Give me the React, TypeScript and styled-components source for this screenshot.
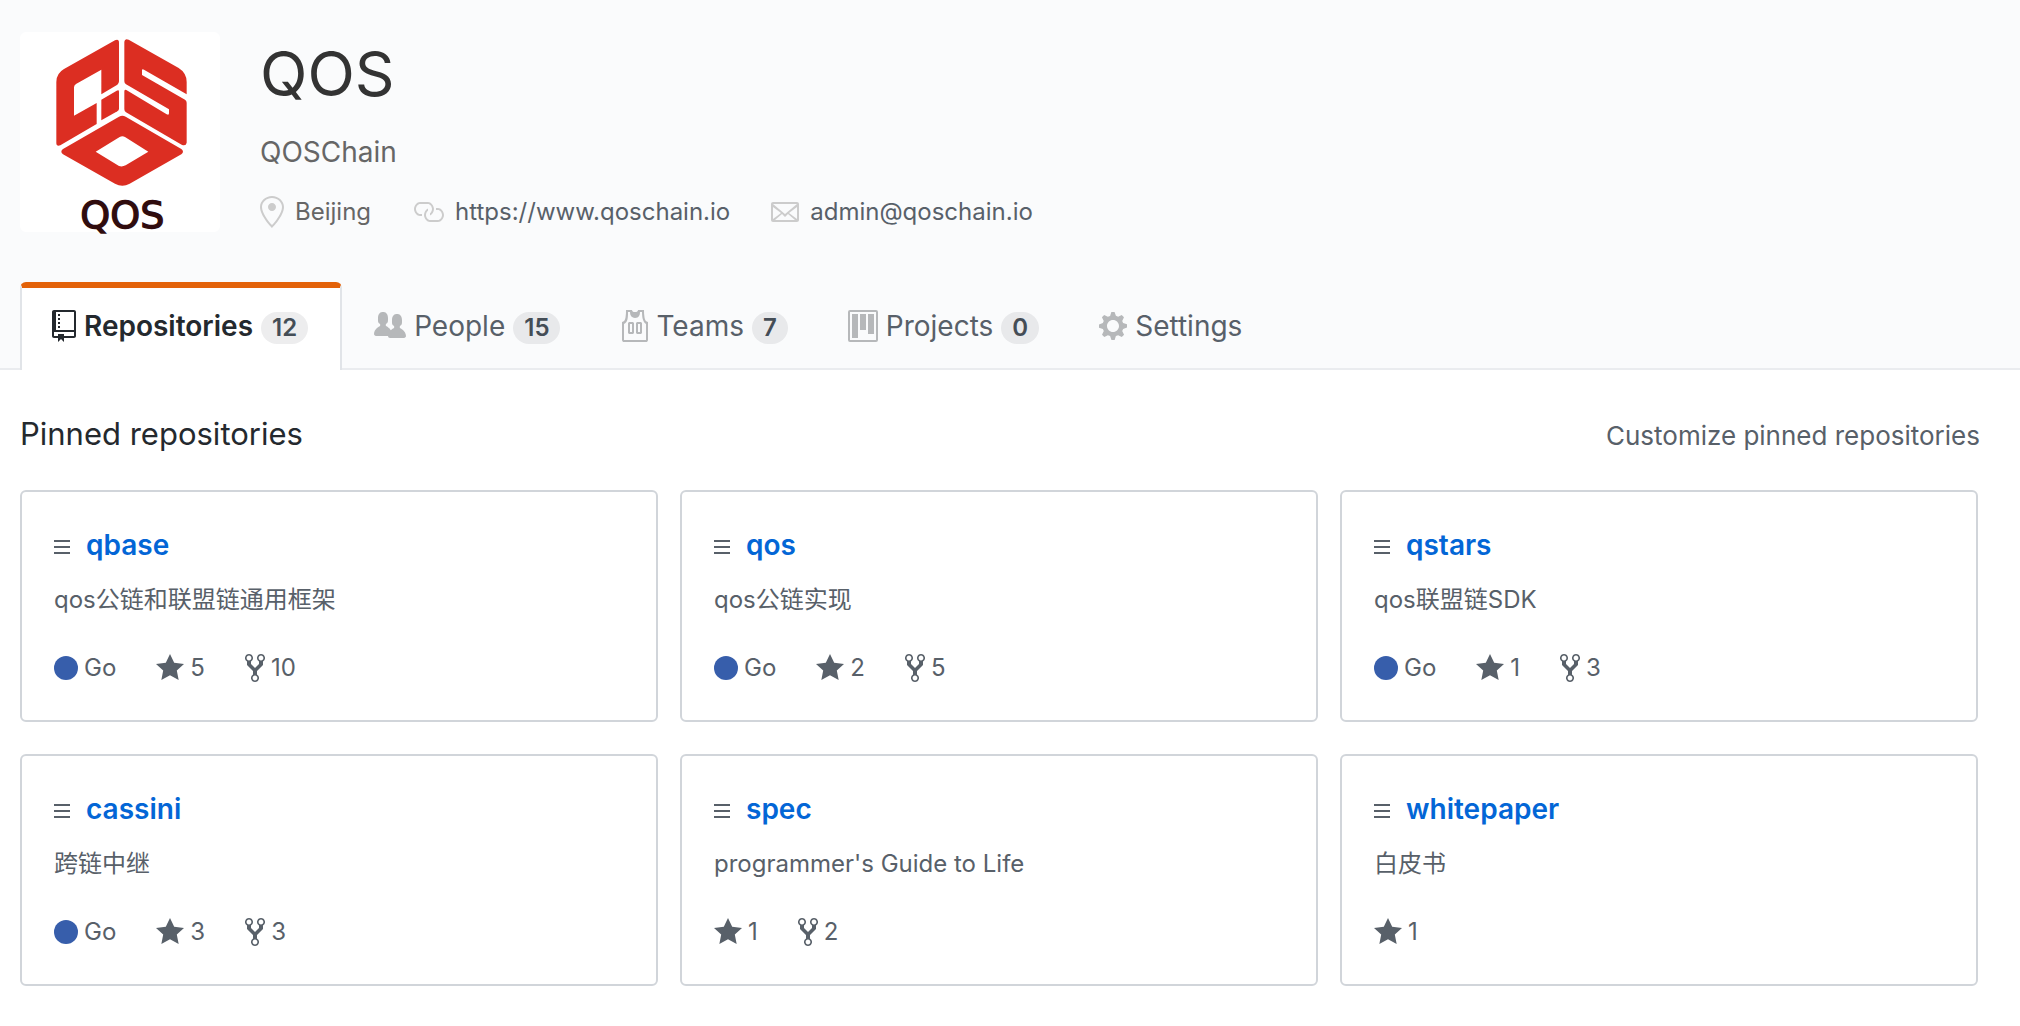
import React from "react";
import styled, { createGlobalStyle } from "styled-components";

const GlobalStyle = createGlobalStyle`
  * { box-sizing: border-box; }
  body {
    margin: 0;
    background: #fff;
    color: #24292e;
    font-family: Inter, "Noto Sans CJK SC", sans-serif;
    font-size: 24px;
    line-height: 36px;
  }
  h1, h2, h3, p, ul { margin: 0; padding: 0; font-weight: 400; }
  ul { list-style: none; }
  a { color: inherit; text-decoration: none; }
`;

const icons = {
  repo: { w: 12, d: "M4 9H3V8h1v1zm0-3H3v1h1V6zm0-2H3v1h1V4zm0-2H3v1h1V2zm8-1v12c0 .55-.45 1-1 1H6v2l-1.5-1.5L3 16v-2H1c-.55 0-1-.45-1-1V1c0-.55.45-1 1-1h10c.55 0 1 .45 1 1zm-1 10H1v2h2v-1h3v1h5v-2zm0-10H2v9h9V1z" },
  people: { w: 16, d: "M16 12.999c0 .439-.45 1-1 1H7.995c-.539 0-.994-.447-.995-.999H1c-.54 0-1-.561-1-1 0-2.634 3-4 3-4s.229-.409 0-1c-.841-.621-1.058-.59-1-3 .058-2.419 1.367-3 2.5-3s2.442.58 2.5 3c.058 2.41-.159 2.379-1 3-.229.59 0 1 0 1s1.549.711 2.42 2.088C9.196 9.369 10 8.999 10 8.999s.229-.409 0-1c-.841-.62-1.058-.59-1-3 .058-2.419 1.367-3 2.5-3s2.437.581 2.495 3c.059 2.41-.158 2.38-1 3-.229.59 0 1 0 1s3.005 1.366 3.005 4" },
  jersey: { w: 14, d: "M4.5 6l-.5.5v5l.5.5h2l.5-.5v-5L6.5 6h-2zM6 11H5V7h1v4zm6.27-7.25C12.05 2.37 11.96 1.12 12 0H9.02c0 .27-.13.48-.39.69-.25.2-.63.3-1.13.3-.5 0-.88-.09-1.13-.3-.23-.2-.36-.42-.37-.69H3c.05 1.13-.03 2.38-.25 3.75C2.55 5.13 1.95 5.88 1 6v9c.02.27.11.48.31.69.2.21.42.3.69.31h11c.27-.02.48-.11.69-.31.21-.2.3-.42.31-.69V6c-.95-.13-1.53-.88-1.75-2.25h.02zM13 15H2V7c.89-.5 1.48-1.25 1.72-2.25S4.03 2.5 4 1h1c-.02.78.16 1.47.52 2.06.36.58 1.02.89 2 .94.98-.02 1.64-.33 2-.94.36-.59.5-1.28.48-2.06h1c.02 1.42.13 2.55.33 3.38.2.81.69 2 1.67 2.63V15zM8.5 6l-.5.5v5l.5.5h2l.5-.5v-5l-.5-.5h-2zm1.5 5H9V7h1v4z" },
  project: { w: 15, d: "M10 12h3V2h-3v10zm-4-2h3V2H6v8zm-4 4h3V2H2v12zm-1 1h13V1H1v14zM14 0H1a1 1 0 0 0-1 1v14a1 1 0 0 0 1 1h13a1 1 0 0 0 1-1V1a1 1 0 0 0-1-1z" },
  gear: { w: 14, d: "M14 8.77v-1.6l-1.94-.64-.45-1.09.88-1.84-1.13-1.13-1.81.91-1.09-.45-.69-1.92h-1.6l-.63 1.94-1.11.45-1.84-.88-1.13 1.13.91 1.81-.45 1.09L0 7.23v1.59l1.94.64.45 1.09-.88 1.84 1.13 1.13 1.81-.91 1.09.45.69 1.92h1.59l.63-1.94 1.11-.45 1.84.88 1.13-1.13-.92-1.81.47-1.09L14 8.75v.02zM7 11c-1.66 0-3-1.34-3-3s1.34-3 3-3 3 1.34 3 3-1.34 3-3 3z" },
  star: { w: 14, d: "M14 6l-4.9-.64L7 1 4.9 5.36 0 6l3.6 3.26L2.67 14 7 11.67 11.33 14l-.93-4.74L14 6z" },
  fork: { w: 10, d: "M8 1a1.993 1.993 0 0 0-1 3.72V6L5 8 3 6V4.72A1.993 1.993 0 0 0 2 1a1.993 1.993 0 0 0-1 3.72V6.5l3 3v1.78A1.993 1.993 0 0 0 5 15a1.993 1.993 0 0 0 1-3.72V9.5l3-3V4.72A1.993 1.993 0 0 0 8 1zM2 4.2C1.34 4.2.8 3.65.8 3c0-.65.55-1.2 1.2-1.2.65 0 1.2.55 1.2 1.2 0 .65-.55 1.2-1.2 1.2zm3 10c-.66 0-1.2-.55-1.2-1.2 0-.65.55-1.2 1.2-1.2.65 0 1.2.55 1.2 1.2 0 .65-.55 1.2-1.2 1.2zm3-10c-.66 0-1.2-.55-1.2-1.2 0-.65.55-1.2 1.2-1.2.65 0 1.2.55 1.2 1.2 0 .65-.55 1.2-1.2 1.2z" },
  link: { w: 16, d: "M4 9h1v1H4c-1.5 0-3-1.69-3-3.5S2.55 3 4 3h4c1.45 0 3 1.69 3 3.5 0 1.41-.91 2.72-2 3.25V8.59c.58-.45 1-1.27 1-2.09C10 5.22 8.98 4 8 4H4c-.98 0-2 1.22-2 2.5S3 9 4 9zm9-3h-1v1h1c1 0 2 1.22 2 2.5S13.98 12 13 12H9c-.98 0-2-1.22-2-2.5 0-.83.42-1.64 1-2.09V6.25c-1.09.53-2 1.84-2 3.25C6 11.31 7.55 13 9 13h4c1.45 0 3-1.69 3-3.5S14.5 6 13 6z" },
  mail: { w: 14, d: "M0 4v8c0 .55.45 1 1 1h12c.55 0 1-.45 1-1V4c0-.55-.45-1-1-1H1c-.55 0-1 .45-1 1zm13 0L7 9 1 4h12zM1 5.5l4 3-4 3v-6zM2 12l3.5-3L7 10.5 8.5 9l3.5 3H2zm11-.5l-4-3 4-3v6z" },
  location: { w: 12, d: "M6 0C2.69 0 0 2.5 0 5.5 0 10.02 6 16 6 16s6-5.98 6-10.5C12 2.5 9.31 0 6 0zm0 14.55C4.14 12.52 1 8.44 1 5.5 1 3.02 3.25 1 6 1c1.34 0 2.61.48 3.56 1.36.92.86 1.44 1.97 1.44 3.14 0 2.94-3.14 7.02-5 9.05zM8 5.5c0 1.11-.89 2-2 2-1.11 0-2-.89-2-2 0-1.11.89-2 2-2 1.11 0 2 .89 2 2z" },
  grabber: { w: 8, d: "M8 4v1H0V4h8zM0 8h8V7H0v1zm0 3h8v-1H0v1z" },
};

type IconName = keyof typeof icons;

const Svg = styled.svg`
  display: block;
  flex: none;
  fill: currentColor;
`;

const Icon = ({ name }: { name: IconName }) => {
  const { w, d } = icons[name];
  return (
    <Svg width={w * 2} height={32} viewBox={`0 0 ${w} 16`} aria-hidden="true">
      <path fillRule="evenodd" d={d} />
    </Svg>
  );
};

const PageHeader = styled.header`
  padding: 32px 20px 0;
  background: #fafbfc;
  border-bottom: 2px solid #eaecef;
`;

const Profile = styled.div`
  display: flex;
  gap: 40px;
  margin-bottom: 50px;
`;

const Avatar = styled.svg`
  flex: none;
  width: 200px;
  height: 200px;
  overflow: visible;
  border-radius: 6px;
  background: #fff;
`;

const Wordmark = styled.text`
  font-family: "DejaVu Sans", sans-serif;
  font-size: 114px;
  fill: #300c0e;
  stroke: #300c0e;
  stroke-width: 4px;
`;

const OrgName = styled.h1`
  font-size: 62px;
  line-height: 84px;
  color: #333;
`;

const OrgTagline = styled.p`
  margin-top: 15px;
  font-size: 28px;
  line-height: 42px;
  color: #666;
`;

const OrgMeta = styled.ul`
  display: flex;
  flex-wrap: wrap;
  gap: 41px;
  margin-top: 21px;
`;

const OrgMetaItem = styled.li`
  display: flex;
  align-items: center;
  gap: 11px;
  color: #666;

  svg { color: #ccc; }
  a { color: #586069; }
`;

const Tabs = styled.nav`
  display: flex;
  margin-bottom: -2px;
`;

const Tab = styled.a<{ $active?: boolean }>`
  display: flex;
  align-items: center;
  gap: 8px;
  padding: 17px 28px 23px;
  border: 2px solid transparent;
  border-top-width: 6px;
  border-bottom: 0;
  border-radius: 6px 6px 0 0;
  font-size: 28px;
  line-height: 42px;
  color: #586069;

  svg { color: #b6b8ba; }

  ${({ $active }) =>
    $active &&
    `
    margin-right: 2px;
    padding-right: 32px;
    padding-left: 30px;
    border-color: #e36209 #e1e4e8 transparent;
    background: #fff;
    color: #24292e;
    font-weight: 600;
    svg { color: inherit; }
  `}
`;

const Counter = styled.span`
  margin-top: 4px;
  padding: 0 11px;
  border-radius: 20px;
  background: rgba(27, 31, 35, 0.08);
  color: #444d56;
  font-size: 24px;
  font-weight: 600;
  line-height: 32px;
`;

const Main = styled.main`
  padding: 40px 40px 39px 20px;
`;

const SectionHead = styled.div`
  display: flex;
  align-items: baseline;
  justify-content: space-between;
  margin-bottom: 32px;
`;

const SectionTitle = styled.h2`
  font-size: 31px;
  line-height: 48px;
`;

const CustomizeButton = styled.button`
  padding: 0;
  border: 0;
  background: none;
  font: inherit;
  font-size: 26px;
  color: #586069;
  cursor: pointer;
`;

const CardGrid = styled.ul`
  display: grid;
  grid-template-columns: repeat(3, 1fr);
  gap: 32px 22px;
  padding-right: 2px;
`;

const Card = styled.li`
  padding: 32px 32px 34px;
  border: 2px solid #d1d5da;
  border-radius: 6px;
  color: #586069;
`;

const CardTitle = styled.h3`
  display: flex;
  align-items: center;
  gap: 16px;
  font-size: 28px;
  line-height: 42px;

  svg { margin-top: 6px; }
  a { color: #0366d6; font-weight: 600; }
`;

const Description = styled.p`
  margin: 16px 0 32px;
`;

const Stats = styled.div`
  display: flex;
  gap: 40px;
`;

const Stat = styled.span`
  display: flex;
  align-items: center;
  gap: 6px;
`;

const LanguageDot = styled.span`
  width: 24px;
  height: 24px;
  border-radius: 50%;
  background: #375eab;
`;

const tabs: { icon: IconName; label: string; count?: number }[] = [
  { icon: "repo", label: "Repositories", count: 12 },
  { icon: "people", label: "People", count: 15 },
  { icon: "jersey", label: "Teams", count: 7 },
  { icon: "project", label: "Projects", count: 0 },
  { icon: "gear", label: "Settings" },
];

const repos: { name: string; text: string; lang?: string; stars: number; forks?: number }[] = [
  { name: "qbase", text: "qos公链和联盟链通用框架", lang: "Go", stars: 5, forks: 10 },
  { name: "qos", text: "qos公链实现", lang: "Go", stars: 2, forks: 5 },
  { name: "qstars", text: "qos联盟链SDK", lang: "Go", stars: 1, forks: 3 },
  { name: "cassini", text: "跨链中继", lang: "Go", stars: 3, forks: 3 },
  { name: "spec", text: "programmer's Guide to Life", stars: 1, forks: 2 },
  { name: "whitepaper", text: "白皮书", stars: 1 },
];

const Logo = () => (
  <Avatar viewBox="60 96 600 600" role="img" aria-label="QOS logo">
    <g fill="#dc2e22">
      <path d="M345 121Q357 116 357 128V244Q357 250 352 254L304 283V209L228 252Q222 256 222 262V347L290 309V372L181 436Q169 440 169 429V246Q169 220 192 207Z" />
      <path d="M304 299L350 272Q357 268 357 275V326Q357 331 352 334L304 361Z" />
      <path d="M373 125Q374 114 386 119L536 204Q560 219 560 246V283L432 209Q426 206 426 211V225L555 299Q560 302 560 308V428Q558 439 545 434L378 337Q373 334 373 328V274Q373 267 379 270L500 343Q507 347 507 340V328L378 253Q373 250 373 244Z" />
      <path fillRule="evenodd" d="M357 350Q367 345 377 350L544 447Q554 455 544 463L389 551Q367 563 345 551L189 463Q179 455 189 447ZM287 455L357 498Q367 501 377 496L445 455L375 411Q367 406 359 411Z" />
    </g>
    <Wordmark x="367" y="685" textAnchor="middle">QOS</Wordmark>
  </Avatar>
);

export default function App() {
  return (
    <>
      <GlobalStyle />
      <PageHeader>
        <Profile>
          <Logo />
          <div>
            <OrgName>QOS</OrgName>
            <OrgTagline>QOSChain</OrgTagline>
            <OrgMeta>
              <OrgMetaItem><Icon name="location" />Beijing</OrgMetaItem>
              <OrgMetaItem>
                <Icon name="link" />
                <a href="https://www.qoschain.io">https://www.qoschain.io</a>
              </OrgMetaItem>
              <OrgMetaItem>
                <Icon name="mail" />
                <a href="mailto:admin@qoschain.io">admin@qoschain.io</a>
              </OrgMetaItem>
            </OrgMeta>
          </div>
        </Profile>
        <Tabs aria-label="Organization">
          {tabs.map((tab, i) => (
            <Tab key={tab.label} href={`#${tab.label.toLowerCase()}`} $active={i === 0} aria-current={i === 0 ? "page" : undefined}>
              <Icon name={tab.icon} />
              {tab.label}
              {tab.count !== undefined && <Counter>{tab.count}</Counter>}
            </Tab>
          ))}
        </Tabs>
      </PageHeader>
      <Main>
        <SectionHead>
          <SectionTitle>Pinned repositories</SectionTitle>
          <CustomizeButton type="button">Customize pinned repositories</CustomizeButton>
        </SectionHead>
        <CardGrid>
          {repos.map((repo) => (
            <Card key={repo.name}>
              <CardTitle>
                <Icon name="grabber" />
                <a href={`#${repo.name}`}>{repo.name}</a>
              </CardTitle>
              <Description>{repo.text}</Description>
              <Stats>
                {repo.lang && <Stat><LanguageDot />{repo.lang}</Stat>}
                <Stat><Icon name="star" />{repo.stars}</Stat>
                {repo.forks !== undefined && <Stat><Icon name="fork" />{repo.forks}</Stat>}
              </Stats>
            </Card>
          ))}
        </CardGrid>
      </Main>
    </>
  );
}
